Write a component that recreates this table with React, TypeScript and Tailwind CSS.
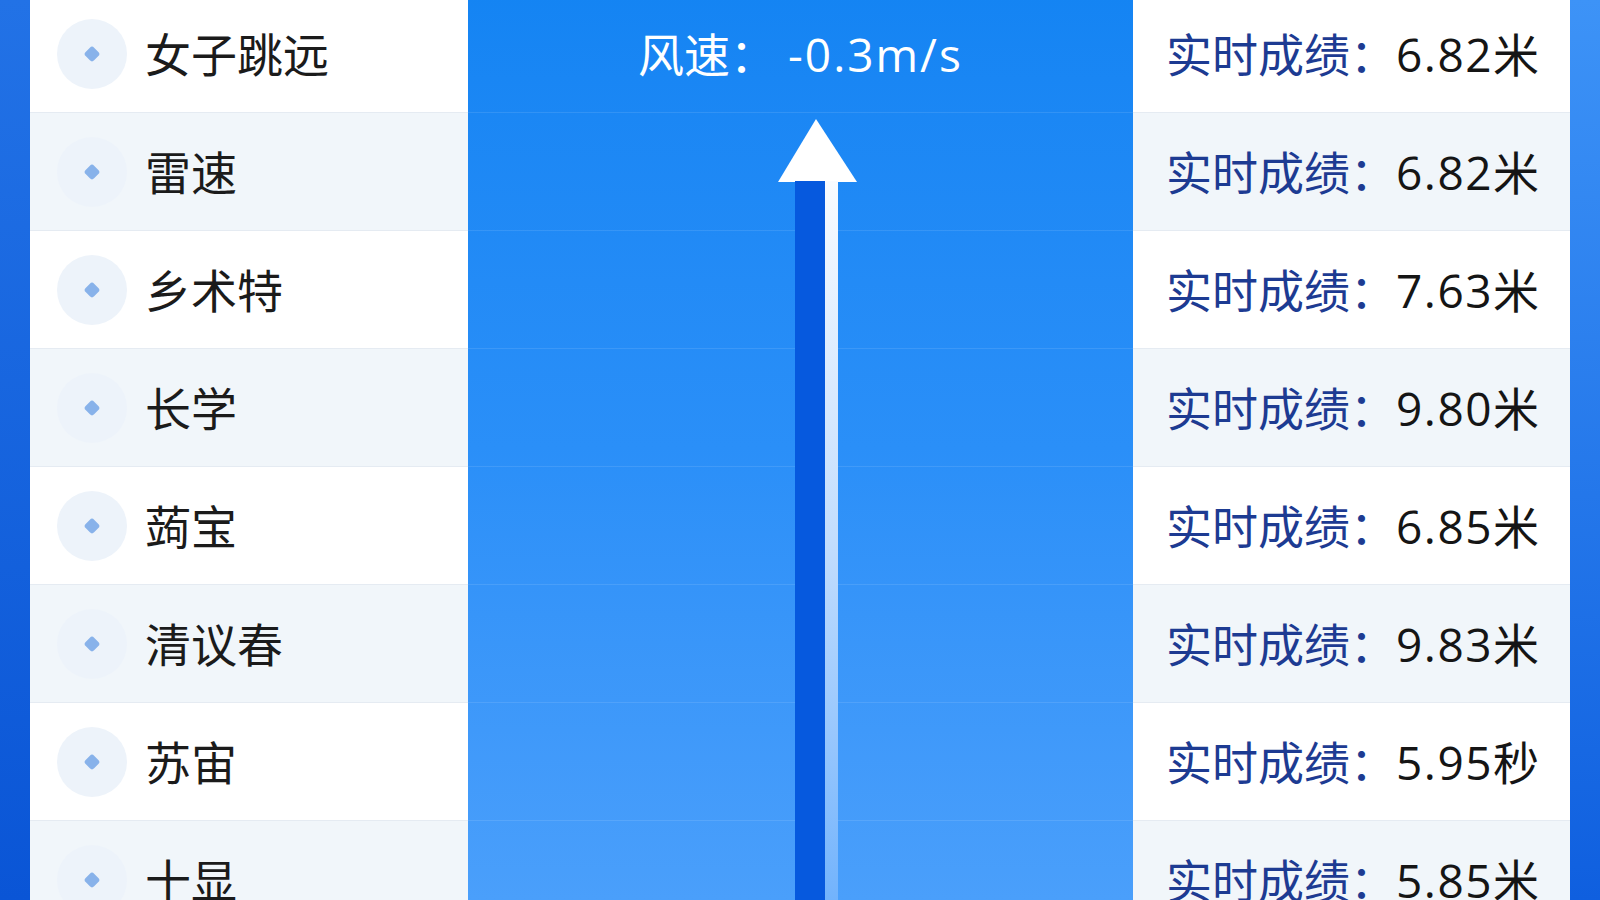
import React from "react";

const names = ["女子跳远", "雷速", "乡术特", "长学", "蒟宝", "清议春", "苏宙", "十显"];
const scores = ["6.82米", "6.82米", "7.63米", "9.80米", "6.85米", "9.83米", "5.95秒", "5.85米"];

const font = { fontFamily: '"Open Sans", "Noto Sans CJK SC", "Noto Sans", sans-serif' };

// white arrow head + two-tone shaft sitting over the middle column
const WindArrow = () => (
    <div className="absolute left-[310px] top-[124px] bottom-0 w-[80px] flex flex-col items-center pointer-events-none">
        <svg width="80" height="64" viewBox="0 0 80 64" className="block">
            <polygon points="38,0 79,63 0,63" fill="#ffffff" />
        </svg>
        <div className="flex flex-1 -mt-[2px] ml-[-3px]">
            <div className="w-[30px] bg-[#0659de]" />
            <div className="w-[13px] bg-gradient-to-b from-[#f8fbff] via-[#c2ddfd] to-[#72b3fc]" />
        </div>
    </div>
);

export default function App() {
    return (
        <div
            className="h-[900px] w-[1600px] overflow-hidden flex bg-gradient-to-b from-[#2272e6] to-[#0a55d6]"
            style={font}
        >
            {/* left blue edge */}
            <div className="w-[30px] shrink-0" />

            <div className="flex flex-1 -mt-[5px]">
                {/* names column */}
                <div className="w-[438px] flex flex-col">
                    {names.map((n, i) => (
                        <div
                            key={i}
                            className={`h-[118px] shrink-0 flex items-center pl-[27px] border-b border-[#e5ebf2] ${
                                i % 2 === 0 ? "bg-white" : "bg-[#f1f6fa]"
                            }`}
                        >
                            <div className="w-[70px] h-[70px] rounded-full bg-[#edf3fa] flex items-center justify-center">
                                <div className="w-[12px] h-[12px] rotate-45 rounded-[3px] bg-[#88b2ea]" />
                            </div>
                            <span className="ml-[18px] text-[46px] leading-none text-[#1b1b1b]">{n}</span>
                        </div>
                    ))}
                </div>

                {/* wind column */}
                <div className="relative w-[665px] flex flex-col bg-gradient-to-b from-[#1484f3] via-[#2a8ff8] to-[#4a9ffb]">
                    {names.map((_, i) => (
                        <div
                            key={i}
                            className="h-[118px] shrink-0 flex items-center justify-center border-b border-white/10"
                        >
                            {i === 0 && (
                                <span className="text-[46px] leading-none text-white">
                                    风速：&nbsp;<span className="tracking-[2px]">-0.3m/s</span>
                                </span>
                            )}
                        </div>
                    ))}
                    <WindArrow />
                </div>

                {/* score column */}
                <div className="w-[437px] flex flex-col">
                    {scores.map((s, i) => (
                        <div
                            key={i}
                            className={`h-[118px] shrink-0 flex items-center pl-[33px] border-b border-[#e5ebf2] ${
                                i % 2 === 0 ? "bg-white" : "bg-[#f1f6fa]"
                            }`}
                        >
                            <span className="text-[46px] leading-none text-[#1d3b92]">实时成绩：</span>
                            <span className="text-[46px] leading-none tracking-[1.5px] text-[#151515]">{s}</span>
                        </div>
                    ))}
                </div>
            </div>

            {/* right blue edge */}
            <div className="w-[30px] shrink-0 bg-gradient-to-b from-[#3d93f7] to-[#0f5fdf]" />
        </div>
    );
}
